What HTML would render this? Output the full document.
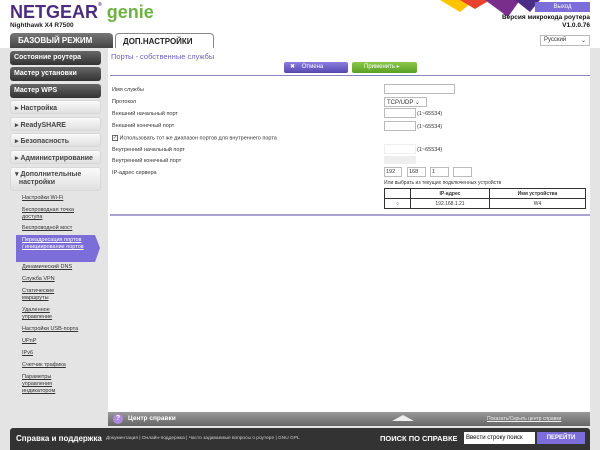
<!DOCTYPE html>
<html><head><meta charset="utf-8"><style>
*{margin:0;padding:0;box-sizing:border-box}
body{width:600px;height:450px;position:relative;overflow:hidden;background:#e4e4e4;font-family:"Liberation Sans",sans-serif;font-size:6px;color:#333}
.a{position:absolute}
.hdr{left:0;top:0;width:600px;height:48px;background:#fff}
.db{background:linear-gradient(#666,#333);color:#fff;font-weight:bold;font-size:7px;padding:3px 4px;border-radius:3px;left:10px;width:91px;height:14px}
.lb{background:linear-gradient(#fafafa,#e0e0e0);color:#444;font-weight:bold;font-size:7px;padding:3px 4px;border-radius:3px;left:10px;width:91px;height:14px;border:1px solid #d8d8d8}
.sl{left:22px;color:#333;text-decoration:underline;font-size:5.5px;line-height:7px}
.lab{left:112px;font-size:5.5px;color:#333}
.inp{left:384px;background:#fff;border:1px solid #bbb;height:10px}
.rng{left:417px;font-size:5.5px}
</style></head><body>
<div class="a hdr"></div>
<svg class="a" style="left:430px;top:0" width="110" height="18"><polygon points="10,0 45,0 30,12" fill="#ffc300"/><polygon points="30,0 60,0 45,9" fill="#e8412d"/><polygon points="55,0 90,0 78,17" fill="#7a2e8c"/><polygon points="85,0 110,0 100,12" fill="#4b2d85"/></svg>
<div class="a" style="left:10px;top:2px;font-size:18px;font-weight:bold;color:#4b2c7f;letter-spacing:0">NETGEAR<span style="font-size:5px;vertical-align:top">®</span> <span style="color:#6db33f">genie</span></div>
<div class="a" style="left:10px;top:22px;font-size:6.5px;font-weight:bold;color:#222">Nighthawk X4 R7500</div>
<div class="a" style="left:10px;top:33px;width:103px;height:15px;background:linear-gradient(#777,#444);border-radius:4px 4px 0 0;color:#fff;font-weight:bold;font-size:8px;padding:3px 8px">БАЗОВЫЙ РЕЖИМ</div>
<div class="a" style="left:115px;top:33px;width:99px;height:15px;background:#fff;border:1px solid #888;border-bottom:none;border-radius:4px 4px 0 0;color:#222;font-weight:bold;font-size:8px;padding:3px 7px">ДОП.НАСТРОЙКИ</div>
<div class="a" style="left:535px;top:2px;width:55px;height:10px;background:#7b6ed8;color:#fff;font-size:6px;text-align:center;line-height:10px">Выход</div>
<div class="a" style="left:470px;top:14px;width:120px;text-align:right;font-size:6.5px;font-weight:bold;color:#111;line-height:8px">Версия микрокода роутера<br>V1.0.0.76</div>
<div class="a" style="left:540px;top:35px;width:50px;height:11px;background:#fff;border:1px solid #bbb;font-size:6px;padding:1px 3px">Русский <span style="float:right">⌄</span></div>

<div class="a" style="left:108px;top:48px;width:482px;height:364px;background:#fff"></div>
<div class="a" style="left:111px;top:52px;font-size:7.5px;color:#6a5fc0">Порты - собственные службы</div>
<div class="a" style="left:284px;top:62px;width:64px;height:11px;background:linear-gradient(#8a7fe0,#5548b0);border-radius:2px;color:#fff;font-size:6px;line-height:11px;padding-left:6px">✖ &nbsp; &nbsp;Отмена</div>
<div class="a" style="left:352px;top:62px;width:65px;height:11px;background:linear-gradient(#8cc84a,#5a9e25);border-radius:2px;color:#fff;font-size:6px;line-height:11px;padding-left:12px">Применить ▸</div>
<div class="a" style="left:110px;top:75px;width:480px;height:1px;background:#8a82c4"></div>

<div class="a lab" style="top:87px">Имя службы</div>
<div class="a lab" style="top:99px">Протокол</div>
<div class="a lab" style="top:111px">Внешний начальный порт</div>
<div class="a lab" style="top:123px">Внешний конечный порт</div>
<div class="a lab" style="top:135px"><span style="display:inline-block;width:6px;height:6px;border:1px solid #666;vertical-align:middle;font-size:5px;line-height:5px">✓</span> Использовать тот же диапазон портов для внутреннего порта</div>
<div class="a lab" style="top:147px">Внутренний начальный порт</div>
<div class="a lab" style="top:158px">Внутренний конечный порт</div>
<div class="a lab" style="top:170px">IP-адрес сервера</div>

<div class="a inp" style="top:84px;width:71px"></div>
<div class="a inp" style="top:97px;width:43px;font-size:6px;padding:1px 2px">TCP/UDP ⌄</div>
<div class="a inp" style="top:108px;width:32px"></div><div class="a rng" style="top:111px">(1~65534)</div>
<div class="a inp" style="top:121px;width:32px"></div><div class="a rng" style="top:124px">(1~65534)</div>
<div class="a inp" style="top:144px;width:32px;border-color:#eee"></div><div class="a rng" style="top:147px">(1~65534)</div>
<div class="a" style="left:384px;top:156px;width:32px;height:8px;background:#eee"></div>
<div class="a inp" style="top:167px;width:18px;font-size:5.5px;padding:1px">192</div>
<div class="a inp" style="left:407px;top:167px;width:19px;font-size:5.5px;padding:1px">168</div>
<div class="a inp" style="left:430px;top:167px;width:19px;font-size:5.5px;padding:1px">1</div>
<div class="a inp" style="left:453px;top:167px;width:19px"></div>
<div class="a" style="left:384px;top:180px;font-size:5px">Или выбрать из текущих подключенных устройств</div>
<table class="a" style="left:384px;top:188px;width:202px;border-collapse:collapse;font-size:5px;text-align:center">
<tr style="height:10px"><td style="border:1px solid #333;width:26px"></td><td style="border:1px solid #333;width:79px;font-weight:bold">IP-адрес</td><td style="border:1px solid #333;font-weight:bold">Имя устройства</td></tr>
<tr style="height:10px"><td style="border:1px solid #333">○</td><td style="border:1px solid #333">192.168.1.21</td><td style="border:1px solid #333">W4</td></tr></table>
<div class="a" style="left:110px;top:214px;width:480px;height:2px;background:#aaa4d4"></div>

<div class="a db" style="top:51px">Состояние роутера</div>
<div class="a db" style="top:67px">Мастер установки</div>
<div class="a db" style="top:84px">Мастер WPS</div>
<div class="a lb" style="top:100px">▸ Настройка</div>
<div class="a lb" style="top:117px">▸ ReadySHARE</div>
<div class="a lb" style="top:133px">▸ Безопасность</div>
<div class="a lb" style="top:150px">▸ Администрирование</div>
<div class="a lb" style="top:167px;height:24px;line-height:8px">▾ Дополнительные<br>&nbsp;&nbsp;настройки</div>
<div class="a sl" style="top:195px">Настройки Wi-Fi</div>
<div class="a sl" style="top:207px">Беспроводная точка<br>доступа</div>
<div class="a sl" style="top:225px">Беспроводной мост</div>
<svg class="a" style="left:16px;top:235px" width="85" height="27"><polygon points="0,0 79,0 84,13 79,27 0,27" fill="#7b6ed8"/></svg>
<div class="a sl" style="top:237px;color:#fff">Переадресация портов<br>/ инициирование портов</div>
<div class="a sl" style="top:264px">Динамический DNS</div>
<div class="a sl" style="top:276px">Служба VPN</div>
<div class="a sl" style="top:288px">Статические<br>маршруты</div>
<div class="a sl" style="top:307px">Удаленное<br>управление</div>
<div class="a sl" style="top:326px">Настройки USB-порта</div>
<div class="a sl" style="top:338px">UPnP</div>
<div class="a sl" style="top:350px">IPv6</div>
<div class="a sl" style="top:362px">Счетчик трафика</div>
<div class="a sl" style="top:374px">Параметры<br>управления<br>индикатором</div>

<div class="a" style="left:108px;top:412px;width:482px;height:14px;background:linear-gradient(#999,#666)"></div>
<div class="a" style="left:113px;top:414px;width:10px;height:10px;border-radius:50%;background:#b08ae0;color:#fff;font-size:7px;text-align:center;line-height:10px;font-weight:bold">?</div>
<div class="a" style="left:128px;top:415px;color:#fff;font-weight:bold;font-size:6.5px">Центр справки</div>
<svg class="a" style="left:392px;top:414px" width="22" height="8"><polygon points="0,7 11,1 22,7" fill="#eee"/></svg>
<div class="a" style="left:487px;top:416px;color:#eee;font-size:5px;text-decoration:underline">Показать/Скрыть центр справки</div>
<div class="a" style="left:10px;top:428px;width:580px;height:22px;background:#333;border-radius:3px 3px 0 0"></div>
<div class="a" style="left:16px;top:434px;color:#fff;font-weight:bold;font-size:8px">Справка и поддержка</div>
<div class="a" style="left:106px;top:436px;color:#ccc;font-size:4.8px">Документация | Онлайн-поддержка | Часто задаваемые вопросы о роутере | GNU GPL</div>
<div class="a" style="left:380px;top:434px;color:#fff;font-weight:bold;font-size:7.5px">ПОИСК ПО СПРАВКЕ</div>
<div class="a" style="left:464px;top:432px;width:71px;height:12px;background:#fff;color:#000;font-size:6px;line-height:12px;padding-left:2px">Ввести строку поиск</div>
<div class="a" style="left:537px;top:432px;width:48px;height:12px;background:#7b6ed8;color:#fff;font-size:6px;line-height:12px;text-align:center;font-weight:bold">ПЕРЕЙТИ</div>
</body></html>
